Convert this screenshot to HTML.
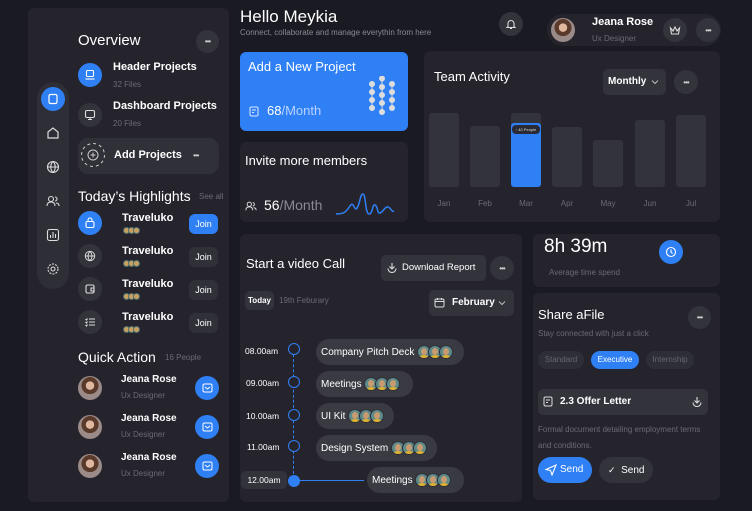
<!DOCTYPE html><html><head><style>
*{margin:0;padding:0;box-sizing:border-box}
body{width:752px;height:511px;background:#1a1a22;font-family:"Liberation Sans",sans-serif;color:#fff;position:relative;overflow:hidden;white-space:nowrap}
.a{position:absolute}
.card{position:absolute;background:#25242d;border-radius:6px}
.c{position:absolute;border-radius:50%;background:#33333c;display:flex;align-items:center;justify-content:center}
.dots{font-size:8px;color:#ccc;letter-spacing:-1px}
.blue{background:#2f80f5}
.g{color:#6b6b75}
.pill{position:absolute;border-radius:14px;background:#3a3a42;display:flex;align-items:center;font-size:10px;padding:0 5px}
.av{display:inline-block;width:14px;height:14px;border-radius:50%;background:#5d8a8a;border:1px solid #2f2f37;margin-left:-3px;position:relative;overflow:hidden}
.av:after{content:"";position:absolute;left:3px;top:2px;width:6px;height:7px;border-radius:50%;background:#c89a70}
.av:before{content:"";position:absolute;left:1px;bottom:-3px;width:10px;height:6px;border-radius:50%;background:#e0b030}
.sav{display:inline-block;width:7px;height:7px;border-radius:50%;background:#c9a060;border:1px solid #4a7070;margin-right:-2px}
.face{border-radius:50%;background:radial-gradient(circle at 50% 40%,#e0b8a0 0 22%,#5a3a2a 23% 45%,#9a8a88 46%)}
svg{display:block}
</style></head><body>
<!-- Sidebar -->
<div class="card" style="left:28px;top:8px;width:201px;height:494px"></div>
<div class="a" style="left:37px;top:82px;width:32px;height:207px;border-radius:16px;background:#2e2e37"></div>
<div class="c blue" style="left:41px;top:87px;width:24px;height:24px"><svg width="12" height="12" viewBox="0 0 12 12" fill="none" stroke="#fff" stroke-width="1.2"><rect x="2" y="1.5" width="8" height="9" rx="1.5"/></svg></div>
<svg class="a" style="left:46px;top:126px" width="14" height="14" viewBox="0 0 14 14" fill="none" stroke="#ddd" stroke-width="1.2"><path d="M2 6l5-4 5 4v6H2z"/></svg>
<svg class="a" style="left:46px;top:160px" width="14" height="14" viewBox="0 0 14 14" fill="none" stroke="#ddd" stroke-width="1.1"><circle cx="7" cy="7" r="5.5"/><path d="M1.5 7h11M7 1.5c-3 3-3 8 0 11M7 1.5c3 3 3 8 0 11"/></svg>
<svg class="a" style="left:46px;top:194px" width="14" height="14" viewBox="0 0 14 14" fill="none" stroke="#ddd" stroke-width="1.1"><circle cx="5" cy="5" r="2.5"/><path d="M1 12c0-3 2-4 4-4s4 1 4 4M9 3a2 2 0 010 4M10 9c2 0 3 1 3 3"/></svg>
<svg class="a" style="left:46px;top:228px" width="14" height="14" viewBox="0 0 14 14" fill="none" stroke="#ddd" stroke-width="1.1"><rect x="1.5" y="1.5" width="11" height="11" rx="2"/><path d="M4.5 10V7M7 10V4M9.5 10V6"/></svg>
<svg class="a" style="left:46px;top:262px" width="14" height="14" viewBox="0 0 14 14" fill="none" stroke="#ddd" stroke-width="1.1"><circle cx="7" cy="7" r="2"/><circle cx="7" cy="7" r="5" stroke-dasharray="2 1.2"/></svg>

<div class="a" style="left:78px;top:32px;font-size:15px">Overview</div>
<div class="c" style="left:196px;top:30px;width:23px;height:23px"><span class="dots">•••</span></div>
<div class="c blue" style="left:78px;top:63px;width:24px;height:24px"><svg width="12" height="12" viewBox="0 0 12 12" fill="none" stroke="#fff" stroke-width="1.1"><rect x="2.5" y="1.5" width="7" height="6" rx="1"/><path d="M1.5 10h9"/></svg></div>
<div class="a" style="left:113px;top:61px;font-size:11px;font-weight:bold">Header Projects</div>
<div class="a g" style="left:113px;top:80px;font-size:8px">32 Files</div>
<div class="c" style="left:78px;top:103px;width:24px;height:24px"><svg width="12" height="12" viewBox="0 0 12 12" fill="none" stroke="#ddd" stroke-width="1.1"><rect x="1.5" y="1.5" width="9" height="7" rx="1.5"/><path d="M6 8.5v2M4 10.5h4"/></svg></div>
<div class="a" style="left:113px;top:100px;font-size:11px;font-weight:bold">Dashboard Projects</div>
<div class="a g" style="left:113px;top:119px;font-size:8px">20 Files</div>
<div class="a" style="left:78px;top:138px;width:141px;height:36px;border-radius:10px;background:#303039"></div>
<svg class="a" style="left:80px;top:142px" width="26" height="26" viewBox="0 0 26 26" fill="none" stroke="#ccc"><circle cx="13" cy="13" r="11.5" stroke-dasharray="3 3"/><circle cx="13" cy="13" r="5"/><path d="M13 10.5v5M10.5 13h5"/></svg>
<div class="a" style="left:114px;top:149px;font-size:11px;font-weight:bold">Add Projects</div>
<div class="a dots" style="left:193px;top:151px">•••</div>

<div class="a" style="left:78px;top:188px;font-size:14px">Today’s Highlights</div>
<div class="a g" style="left:199px;top:192px;font-size:8px">See all</div>
<div class="c blue" style="left:78px;top:211px;width:24px;height:24px"><svg width="12" height="12" viewBox="0 0 12 12" fill="none" stroke="#fff" stroke-width="1.1"><rect x="2" y="4.5" width="8" height="6" rx="1.5"/><path d="M4 4.5V3a2 2 0 014 0v1.5"/></svg></div>
<div class="c" style="left:78px;top:244px;width:24px;height:24px"><svg width="12" height="12" viewBox="0 0 14 14" fill="none" stroke="#ddd" stroke-width="1.1"><circle cx="7" cy="7" r="5.5"/><path d="M1.5 7h11M7 1.5c-3 3-3 8 0 11M7 1.5c3 3 3 8 0 11"/></svg></div>
<div class="c" style="left:78px;top:277px;width:24px;height:24px"><svg width="12" height="12" viewBox="0 0 12 12" fill="none" stroke="#ddd" stroke-width="1.1"><rect x="2" y="2" width="8" height="8" rx="1.5"/><path d="M7 5h3v3H7z"/></svg></div>
<div class="c" style="left:78px;top:310px;width:24px;height:24px"><svg width="12" height="12" viewBox="0 0 12 12" fill="none" stroke="#ddd" stroke-width="1.1"><path d="M5 3h6M5 6h6M5 9h6M1.5 3l1 1 1-1.5M1.5 6l1 1 1-1.5M1.5 9l1 1 1-1.5"/></svg></div>
<div class="a" style="left:122px;top:212px;font-size:11px;font-weight:bold">Traveluko</div>
<div class="a" style="left:123px;top:227px;line-height:0"><i class="sav"></i><i class="sav"></i><i class="sav"></i></div>
<div class="a" style="left:122px;top:245px;font-size:11px;font-weight:bold">Traveluko</div>
<div class="a" style="left:123px;top:260px;line-height:0"><i class="sav"></i><i class="sav"></i><i class="sav"></i></div>
<div class="a" style="left:122px;top:278px;font-size:11px;font-weight:bold">Traveluko</div>
<div class="a" style="left:123px;top:293px;line-height:0"><i class="sav"></i><i class="sav"></i><i class="sav"></i></div>
<div class="a" style="left:122px;top:311px;font-size:11px;font-weight:bold">Traveluko</div>
<div class="a" style="left:123px;top:326px;line-height:0"><i class="sav"></i><i class="sav"></i><i class="sav"></i></div>
<div class="a blue" style="left:189px;top:214px;width:29px;height:20px;border-radius:6px;font-size:9px;text-align:center;line-height:20px">Join</div>
<div class="a" style="left:189px;top:247px;width:29px;height:20px;border-radius:6px;background:#303039;font-size:9px;text-align:center;line-height:20px">Join</div>
<div class="a" style="left:189px;top:280px;width:29px;height:20px;border-radius:6px;background:#303039;font-size:9px;text-align:center;line-height:20px">Join</div>
<div class="a" style="left:189px;top:313px;width:29px;height:20px;border-radius:6px;background:#303039;font-size:9px;text-align:center;line-height:20px">Join</div>

<div class="a" style="left:78px;top:349px;font-size:14px">Quick Action</div>
<div class="a g" style="left:165px;top:353px;font-size:8px">16 People</div>
<div class="a face" style="left:78px;top:376px;width:24px;height:24px"></div>
<div class="a face" style="left:78px;top:415px;width:24px;height:24px"></div>
<div class="a face" style="left:78px;top:454px;width:24px;height:24px"></div>
<div class="a" style="left:121px;top:374px;font-size:10px;font-weight:bold">Jeana Rose</div>
<div class="a g" style="left:121px;top:391px;font-size:8px">Ux Designer</div>
<div class="a" style="left:121px;top:413px;font-size:10px;font-weight:bold">Jeana Rose</div>
<div class="a g" style="left:121px;top:430px;font-size:8px">Ux Designer</div>
<div class="a" style="left:121px;top:452px;font-size:10px;font-weight:bold">Jeana Rose</div>
<div class="a g" style="left:121px;top:469px;font-size:8px">Ux Designer</div>
<div class="c blue" style="left:195px;top:376px;width:24px;height:24px"><svg width="11" height="10" viewBox="0 0 11 10" fill="none" stroke="#fff"><rect x="1" y="1" width="9" height="8" rx="1.5"/><path d="M3 4l2.5 2L8 4"/></svg></div>
<div class="c blue" style="left:195px;top:415px;width:24px;height:24px"><svg width="11" height="10" viewBox="0 0 11 10" fill="none" stroke="#fff"><rect x="1" y="1" width="9" height="8" rx="1.5"/><path d="M3 4l2.5 2L8 4"/></svg></div>
<div class="c blue" style="left:195px;top:454px;width:24px;height:24px"><svg width="11" height="10" viewBox="0 0 11 10" fill="none" stroke="#fff"><rect x="1" y="1" width="9" height="8" rx="1.5"/><path d="M3 4l2.5 2L8 4"/></svg></div>

<!-- Header -->
<div class="a" style="left:240px;top:7px;font-size:17px">Hello Meykia</div>
<div class="a" style="left:240px;top:28px;font-size:8px;color:#8a8a94">Connect, collaborate and manage everythin from here</div>
<div class="c" style="left:499px;top:12px;width:24px;height:24px"><svg width="12" height="12" viewBox="0 0 12 12" fill="none" stroke="#ddd" stroke-width="1.1"><path d="M3 8.5V5.5a3 3 0 016 0v3l1 1H2zM5 10.5h2"/></svg></div>
<div class="a" style="left:547px;top:14px;width:174px;height:32px;border-radius:16px;background:#25242d"></div>
<div class="a face" style="left:551px;top:18px;width:24px;height:24px"></div>
<div class="a" style="left:592px;top:16px;font-size:11px;font-weight:bold">Jeana Rose</div>
<div class="a g" style="left:592px;top:34px;font-size:8px">Ux Designer</div>
<div class="c" style="left:663px;top:18px;width:24px;height:24px"><svg width="12" height="11" viewBox="0 0 12 11" fill="none" stroke="#ddd" stroke-width="1.1"><path d="M1.5 3l2.5 3 2-4 2 4 2.5-3-1 6H2.5z"/></svg></div>
<div class="c" style="left:696px;top:18px;width:24px;height:24px"><span class="dots">•••</span></div>

<!-- Add a new project -->
<div class="card blue" style="left:240px;top:52px;width:168px;height:79px"></div>
<div class="a" style="left:248px;top:59px;font-size:13px">Add a New Project</div>
<svg class="a" style="left:249px;top:106px" width="11" height="11" viewBox="0 0 11 11" fill="none" stroke="#dfe8ff"><rect x="1" y="1" width="8" height="9" rx="1.5"/><path d="M3 4h4M3 6.5h2"/></svg>
<div class="a" style="left:267px;top:103px;font-size:13px">68<span style="color:#b8d2ff">/Month</span></div>
<svg class="a" style="left:368px;top:76px" width="30" height="44" viewBox="0 0 30 44" fill="#ddd" stroke="#ddd"><path d="M4 8v24M14 2v36M24 8v24"/><circle cx="4" cy="8" r="2.5"/><circle cx="4" cy="16" r="2.5"/><circle cx="4" cy="24" r="2.5"/><circle cx="4" cy="32" r="2.5"/><circle cx="14" cy="2.5" r="2.5"/><circle cx="14" cy="11" r="2.5"/><circle cx="14" cy="19" r="2.5"/><circle cx="14" cy="27" r="2.5"/><circle cx="14" cy="36" r="2.5"/><circle cx="24" cy="8" r="2.5"/><circle cx="24" cy="16" r="2.5"/><circle cx="24" cy="24" r="2.5"/><circle cx="24" cy="32" r="2.5"/></svg>

<div class="card" style="left:240px;top:142px;width:168px;height:80px"></div>
<div class="a" style="left:245px;top:153px;font-size:13px">Invite more members</div>
<svg class="a" style="left:245px;top:200px" width="12" height="12" viewBox="0 0 14 14" fill="none" stroke="#ddd" stroke-width="1.1"><circle cx="5" cy="5" r="2.5"/><path d="M1 12c0-3 2-4 4-4s4 1 4 4M9 3a2 2 0 010 4M10 9c2 0 3 1 3 3"/></svg>
<div class="a" style="left:264px;top:197px;font-size:14px">56<span style="color:#8a8a94">/Month</span></div>
<svg class="a" style="left:335px;top:190px" width="60" height="28" viewBox="0 0 60 28" fill="none" stroke="#2f80f5" stroke-width="1.5"><path d="M1 24c8 0 10-2 14-8s4 6 7 2 3-14 6-14 2 20 6 20 3-10 6-9 2 9 5 8 4-5 7-6 5 6 7 4"/></svg>

<!-- Team activity -->
<div class="card" style="left:424px;top:51px;width:296px;height:171px"></div>
<div class="a" style="left:434px;top:69px;font-size:13px">Team Activity</div>
<div class="a" style="left:603px;top:69px;width:63px;height:26px;border-radius:5px;background:#33333c;font-size:10px;font-weight:bold;line-height:26px;padding-left:5px">Monthly</div>
<svg class="a" style="left:651px;top:79px" width="8" height="6" viewBox="0 0 8 6" fill="none" stroke="#bbb"><path d="M1 1.5l3 3 3-3"/></svg>
<div class="c" style="left:674px;top:70px;width:24px;height:24px"><span class="dots">•••</span></div>
<div class="a" style="left:429px;top:113px;width:30px;height:74px;border-radius:3px;background:#33333c"></div>
<div class="a" style="left:470px;top:126px;width:30px;height:61px;border-radius:3px;background:#33333c"></div>
<div class="a" style="left:511px;top:113px;width:30px;height:74px;border-radius:3px;background:#33333c"></div>
<div class="a blue" style="left:511px;top:123px;width:30px;height:64px;border-radius:3px"></div>
<div class="a" style="left:512px;top:125px;width:28px;height:9px;border-radius:4px;background:#2a2a35;font-size:4px;line-height:9px;text-align:center;color:#ddd">▫ 40 People</div>
<div class="a" style="left:552px;top:127px;width:30px;height:60px;border-radius:3px;background:#33333c"></div>
<div class="a" style="left:593px;top:140px;width:30px;height:47px;border-radius:3px;background:#33333c"></div>
<div class="a" style="left:635px;top:120px;width:30px;height:67px;border-radius:3px;background:#33333c"></div>
<div class="a" style="left:676px;top:115px;width:30px;height:72px;border-radius:3px;background:#33333c"></div>
<div class="a g" style="left:429px;top:199px;width:30px;text-align:center;font-size:8px">Jan</div>
<div class="a g" style="left:470px;top:199px;width:30px;text-align:center;font-size:8px">Feb</div>
<div class="a g" style="left:511px;top:199px;width:30px;text-align:center;font-size:8px">Mar</div>
<div class="a g" style="left:552px;top:199px;width:30px;text-align:center;font-size:8px">Apr</div>
<div class="a g" style="left:593px;top:199px;width:30px;text-align:center;font-size:8px">May</div>
<div class="a g" style="left:635px;top:199px;width:30px;text-align:center;font-size:8px">Jun</div>
<div class="a g" style="left:676px;top:199px;width:30px;text-align:center;font-size:8px">Jul</div>

<!-- Video call -->
<div class="card" style="left:240px;top:234px;width:282px;height:268px"></div>
<div class="a" style="left:246px;top:256px;font-size:13px">Start a video Call</div>
<div class="a" style="left:381px;top:255px;width:105px;height:26px;border-radius:5px;background:#33333c;font-size:9.5px;line-height:26px;padding-left:21px">Download Report</div>
<svg class="a" style="left:386px;top:262px" width="12" height="12" viewBox="0 0 12 12" fill="none" stroke="#ddd" stroke-width="1.1"><path d="M6 1v6M3.5 4.5L6 7l2.5-2.5M2 6.5a4 4 0 008 0"/></svg>
<div class="c" style="left:490px;top:256px;width:24px;height:24px"><span class="dots">•••</span></div>
<div class="a" style="left:245px;top:291px;width:29px;height:19px;border-radius:5px;background:#33333c;font-size:8px;font-weight:bold;line-height:19px;text-align:center">Today</div>
<div class="a g" style="left:279px;top:296px;font-size:8px">19th Feburary</div>
<div class="a" style="left:429px;top:290px;width:85px;height:26px;border-radius:5px;background:#33333c;font-size:10px;font-weight:bold;line-height:26px;padding-left:23px">February</div>
<svg class="a" style="left:498px;top:300px" width="8" height="6" viewBox="0 0 8 6" fill="none" stroke="#bbb"><path d="M1 1.5l3 3 3-3"/></svg>
<svg class="a" style="left:434px;top:297px" width="11" height="11" viewBox="0 0 11 11" fill="none" stroke="#ddd"><rect x="1" y="2" width="9" height="8" rx="1.5"/><path d="M1 4.5h9M3.5 1v2M7.5 1v2"/></svg>
<div class="a" style="left:293px;top:349px;height:130px;border-left:1.2px dashed #2f80f5"></div>
<div class="a" style="left:294px;top:480px;width:70px;height:1px;background:#2f80f5"></div>
<div class="a" style="left:245px;top:346px;font-size:8.5px">08.00am</div>
<div class="a" style="left:246px;top:378px;font-size:8.5px">09.00am</div>
<div class="a" style="left:246px;top:411px;font-size:8.5px">10.00am</div>
<div class="a" style="left:247px;top:442px;font-size:8.5px">11.00am</div>
<div class="a" style="left:241px;top:471px;width:46px;height:18px;border-radius:5px;background:#33333c;font-size:8.5px;line-height:18px;text-align:center">12.00am</div>
<div class="a" style="left:288px;top:343px;width:12px;height:12px;border-radius:50%;border:1.5px solid #2f80f5;background:#25242d"></div>
<div class="a" style="left:288px;top:376px;width:12px;height:12px;border-radius:50%;border:1.5px solid #2f80f5;background:#25242d"></div>
<div class="a" style="left:288px;top:409px;width:12px;height:12px;border-radius:50%;border:1.5px solid #2f80f5;background:#25242d"></div>
<div class="a" style="left:288px;top:440px;width:12px;height:12px;border-radius:50%;border:1.5px solid #2f80f5;background:#25242d"></div>
<div class="a blue" style="left:288px;top:475px;width:12px;height:12px;border-radius:50%"></div>
<div class="pill blue" style="left:316px;top:339px;height:26px;width:148px">Company Pitch Deck&nbsp;&nbsp;<i class="av"></i><i class="av"></i><i class="av"></i></div>
<div class="pill" style="left:316px;top:371px;height:26px;width:97px">Meetings&nbsp;&nbsp;<i class="av"></i><i class="av"></i><i class="av"></i></div>
<div class="pill blue" style="left:316px;top:403px;height:26px;width:78px">UI Kit&nbsp;&nbsp;<i class="av"></i><i class="av"></i><i class="av"></i></div>
<div class="pill" style="left:316px;top:435px;height:26px;width:121px">Design System&nbsp;&nbsp;<i class="av"></i><i class="av"></i><i class="av"></i></div>
<div class="pill" style="left:367px;top:467px;height:26px;width:97px">Meetings&nbsp;&nbsp;<i class="av"></i><i class="av"></i><i class="av"></i></div>

<!-- Time -->
<div class="card" style="left:533px;top:234px;width:187px;height:53px"></div>
<div class="a" style="left:544px;top:236px;font-size:19px">8h 39m</div>
<div class="a g" style="left:549px;top:268px;font-size:8px">Average time spend</div>
<div class="c blue" style="left:659px;top:240px;width:24px;height:24px"><svg width="12" height="12" viewBox="0 0 12 12" fill="none" stroke="#fff" stroke-width="1.1"><circle cx="6" cy="6" r="4.5"/><path d="M6 3.5V6l1.5 1.5"/></svg></div>

<!-- Share -->
<div class="card" style="left:533px;top:293px;width:187px;height:207px"></div>
<div class="a" style="left:538px;top:307px;font-size:13px">Share aFile</div>
<div class="c" style="left:688px;top:306px;width:23px;height:23px"><span class="dots">•••</span></div>
<div class="a g" style="left:538px;top:329px;font-size:8px">Stay connected with just a click</div>
<div class="a" style="left:538px;top:351px;width:46px;height:18px;border-radius:9px;background:#2e2e37;font-size:8px;line-height:18px;text-align:center;color:#66666f">Standard</div>
<div class="a blue" style="left:591px;top:351px;width:48px;height:18px;border-radius:9px;font-size:8px;line-height:18px;text-align:center">Executive</div>
<div class="a" style="left:646px;top:351px;width:48px;height:18px;border-radius:9px;background:#2e2e37;font-size:8px;line-height:18px;text-align:center;color:#66666f">Internship</div>
<div class="a" style="left:538px;top:389px;width:170px;height:26px;border-radius:5px;background:#33333c;font-size:10px;font-weight:bold;line-height:26px;padding-left:22px">2.3 Offer Letter</div>
<svg class="a" style="left:543px;top:396px" width="11" height="11" viewBox="0 0 11 11" fill="none" stroke="#ddd"><rect x="1" y="1" width="8" height="9" rx="1.5"/><path d="M3 4h4M3 6.5h2"/></svg>
<svg class="a" style="left:691px;top:396px" width="12" height="12" viewBox="0 0 12 12" fill="none" stroke="#ddd" stroke-width="1.1"><path d="M6 1v6M3.5 4.5L6 7l2.5-2.5M2 6.5a4 4 0 008 0"/></svg>
<div class="a g" style="left:538px;top:422px;font-size:8px;line-height:16px;width:170px;white-space:normal">Formal document detailing employment terms and conditions.</div>
<div class="a blue" style="left:538px;top:457px;width:54px;height:26px;border-radius:13px;font-size:10px;line-height:26px;padding-left:22px">Send</div>
<svg class="a" style="left:545px;top:464px" width="12" height="12" viewBox="0 0 12 12" fill="none" stroke="#fff" stroke-width="1.1"><path d="M1 5.5L11 1 7 11 5.5 6.5z"/></svg>
<div class="a" style="left:599px;top:457px;width:54px;height:26px;border-radius:13px;background:#33333c;font-size:10px;line-height:26px;padding-left:9px"><span style="font-size:9px">✓</span>&nbsp;&nbsp;Send</div>
</body></html>
